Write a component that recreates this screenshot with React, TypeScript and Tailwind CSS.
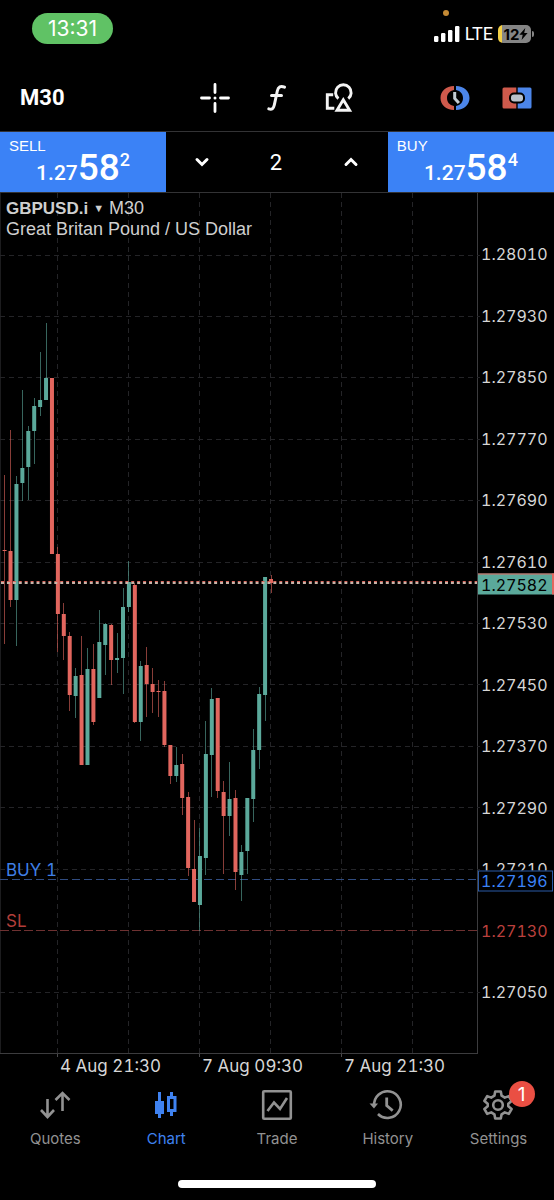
import React, { useState } from "react";

type Candle = [kind: "up" | "down", high: number, top: number, bottom: number, low: number];

const UP = "#5ba99b";
const DOWN = "#e2665e";

const CANDLES: Candle[] = [
  ["down", 475, 550, 551, 644],
  ["down", 430, 551, 600, 607],
  ["up", 476, 484, 600, 646],
  ["up", 390, 468, 483, 501],
  ["up", 426, 431, 467, 500],
  ["up", 398, 406, 431, 464],
  ["up", 352, 400, 407, 416],
  ["up", 323, 378, 400, 400],
  ["down", 378, 378, 554, 554],
  ["down", 547, 554, 614, 652],
  ["down", 603, 614, 636, 660],
  ["down", 632, 636, 695, 711],
  ["up", 668, 676, 696, 718],
  ["down", 636, 675, 765, 765],
  ["up", 648, 669, 765, 765],
  ["down", 644, 669, 722, 725],
  ["up", 610, 642, 698, 698],
  ["up", 623, 624, 645, 675],
  ["down", 624, 625, 660, 685],
  ["up", 633, 658, 660, 673],
  ["up", 588, 607, 658, 694],
  ["up", 561, 582, 607, 612],
  ["down", 583, 585, 722, 723],
  ["up", 661, 666, 722, 741],
  ["down", 647, 665, 684, 717],
  ["down", 668, 684, 692, 713],
  ["down", 680, 691, 692, 717],
  ["down", 681, 691, 745, 747],
  ["down", 745, 745, 776, 784],
  ["up", 747, 765, 776, 782],
  ["down", 754, 764, 798, 815],
  ["down", 792, 797, 868, 876],
  ["down", 820, 869, 902, 902],
  ["up", 828, 856, 905, 931],
  ["up", 721, 754, 858, 875],
  ["up", 688, 699, 755, 797],
  ["down", 698, 698, 791, 798],
  ["down", 781, 792, 816, 874],
  ["up", 762, 799, 816, 836],
  ["down", 790, 798, 872, 890],
  ["up", 845, 852, 875, 901],
  ["up", 798, 798, 851, 874],
  ["up", 729, 750, 799, 822],
  ["up", 687, 694, 750, 769],
  ["up", 577, 577, 695, 721],
  ["down", 575, 579, 583, 593],
];

const PRICES = [
  "1.28010", "1.27930", "1.27850", "1.27770", "1.27690", "1.27610", "1.27530",
  "1.27450", "1.27370", "1.27290", "1.27210", "1.27130", "1.27050",
];

const TOP = 193;
const HEIGHT = 860;
const WIDTH = 477;

function priceY(price: number) {
  return 255 + ((1.2801 - price) / 0.0008) * 61.42 - TOP;
}

function percent(price: number) {
  return `${(priceY(price) / HEIGHT) * 100}%`;
}

function StatusBar() {
  return (
    <div className="relative flex h-[62px] items-start justify-between pl-8 pr-5">
      <div className="mt-[13px] flex h-[31px] w-[81px] items-center justify-center rounded-full bg-[#60c265] text-[21px] leading-none">
        13:31
      </div>
      <span className="absolute right-[105px] top-[10px] size-[6px] rounded-full bg-[#c48a35]" />
      <div className="mt-6 flex h-5 items-center">
        <svg width="26" height="16" viewBox="0 0 26 16" fill="#fff" aria-hidden="true">
          <rect x="0" y="10" width="4.4" height="6" rx="1.2" />
          <rect x="7" y="7" width="4.4" height="9" rx="1.2" />
          <rect x="14" y="4" width="4.4" height="12" rx="1.2" />
          <rect x="21" y="0" width="4.4" height="16" rx="1.2" />
        </svg>
        <span className="ml-[5px] font-['Roboto'] text-[18px] leading-5">LTE</span>
        <div className="ml-[5px] flex h-[18px] w-[33px] items-center justify-center overflow-hidden rounded-[5px] bg-[linear-gradient(to_right,#f3cf45_4px,#858585_4px)] text-black">
          <span className="ml-[3px] text-[15px] font-bold leading-none">12</span>
          <svg width="9" height="12" viewBox="0 0 9 12" aria-hidden="true">
            <path d="M6.3 0 0.4 6.8h3.3L2.6 12 8.6 5H5.2z" fill="#000" />
          </svg>
        </div>
        <span className="ml-px h-[6px] w-[2px] rounded-r-full bg-[#858585]" />
      </div>
    </div>
  );
}

function ToolButton({ label, children }: { label: string; children: React.ReactNode }) {
  return (
    <button type="button" aria-label={label} className="flex h-12 w-[62px] items-center justify-center">
      {children}
    </button>
  );
}

function Toolbar() {
  return (
    <div className="grid h-[69px] grid-cols-[1fr_auto_1fr] items-center pt-[2px]">
      <div className="flex">
        <button type="button" className="pl-5 font-['Roboto'] text-[22px] font-bold leading-7">
          M30
        </button>
      </div>
      <div className="flex">
        <ToolButton label="Crosshair">
          <svg width="30" height="30" viewBox="0 0 30 30" stroke="#fff" strokeWidth="2.8" strokeLinecap="round" aria-hidden="true">
            <path d="M15 1.5v8M15 20.5v8M1.500 15h8M20.500 15h8" />
            <circle cx="15" cy="15" r="1.5" fill="#fff" stroke="none" />
          </svg>
        </ToolButton>
        <ToolButton label="Indicators">
          <svg width="20" height="28" viewBox="0 0 20 28" fill="none" stroke="#f4f4f4" strokeWidth="3" strokeLinecap="round" aria-hidden="true">
            <path d="M17.500 3.200c-3.800-1.700-6.300-.4-7.200 3.800L7.300 21c-.8 3.700-2.500 5-5.500 3.900M4.500 11.500h10" />
          </svg>
        </ToolButton>
        <ToolButton label="Objects">
          <svg width="28" height="30" viewBox="0 0 28 30" fill="none" stroke="#f4f4f4" strokeWidth="2.9" aria-hidden="true">
            <path d="M8.200 11.800H2.300v13.400h7" />
            <path d="M13.400 15.600a7.800 7.800 0 1 1 9.900 0" />
            <path d="M18.300 16.800 12 27.200h12.600z" />
          </svg>
        </ToolButton>
      </div>
      <div className="flex justify-end pr-[6px]">
        <ToolButton label="Trading sessions">
          <svg width="30" height="26" viewBox="0 0 30 26" fill="none" aria-hidden="true">
            <path d="M14 1C6 1 .5 6.300 .5 13s5.500 12 13.500 12v-4C9.300 20 7 17 7 13s2.300-7 7-8z" fill="#cf5a4c" />
            <path d="M16 1C24 1 29.500 6.300 29.500 13s-5.500 12-13.500 12v-4C20.700 20 23 17 23 13s-2.300-7-7-8z" fill="#4c86ea" />
            <path d="M14.700 7v6.500l4.200 4.600" stroke="#c3cbd2" strokeWidth="3" />
          </svg>
        </ToolButton>
        <ToolButton label="One click trading">
          <svg width="30" height="22" viewBox="0 0 30 22" aria-hidden="true">
            <path d="M2 .5h12.300v21H2A1.500 1.500 0 0 1 .5 20V2A1.500 1.500 0 0 1 2 .5z" fill="#cf5a4c" />
            <path d="M15.700 .5H28A1.500 1.500 0 0 1 29.500 2v18a1.500 1.500 0 0 1-1.500 1.500H15.700z" fill="#4c86ea" />
            <rect x="7" y="5.5" width="16" height="11" rx="5" fill="#000" />
            <rect x="9" y="7.5" width="12" height="7" rx="3" fill="#b9c2cb" />
          </svg>
        </ToolButton>
      </div>
    </div>
  );
}

function QuoteButton({ side, pip }: { side: string; pip: string }) {
  return (
    <button type="button" className="flex h-[60px] flex-col bg-[#3b82f6] pt-[6px] text-left">
      <span className="pl-[9px] font-['Liberation_Sans'] text-[15px] leading-4">{side}</span>
      <span className="-mt-[6px] flex items-baseline self-center font-['Roboto'] font-medium leading-10">
        <span className="text-[21px]">1.27</span>
        <span className="text-[37px]">58</span>
        <span className="self-start text-[18px] leading-6">{pip}</span>
      </span>
    </button>
  );
}

function TradePanel() {
  const [volume, setVolume] = useState(2);
  return (
    <div className="grid grid-cols-[3fr_4fr_3fr] border-y border-[#333335]">
      <QuoteButton side="SELL" pip="2" />
      <div className="flex items-center justify-between">
        <button type="button" aria-label="Decrease volume" onClick={() => setVolume(Math.max(1, volume - 1))} className="flex h-full w-[72px] items-center justify-center">
          <svg width="16" height="12" viewBox="0 0 16 12" fill="none" stroke="#fff" strokeWidth="3" strokeLinecap="round" aria-hidden="true">
            <path d="m3 3.500 5 5 5-5" />
          </svg>
        </button>
        <input
          aria-label="Volume"
          value={volume}
          onChange={(e) => setVolume(Number(e.target.value) || 1)}
          className="w-10 min-w-0 flex-1 bg-transparent pt-[2px] text-center font-['Roboto'] text-[22px] leading-7 outline-none"
        />
        <button type="button" aria-label="Increase volume" onClick={() => setVolume(volume + 1)} className="flex h-full w-[74px] items-center justify-center">
          <svg width="16" height="12" viewBox="0 0 16 12" fill="none" stroke="#fff" strokeWidth="3" strokeLinecap="round" aria-hidden="true">
            <path d="m3 8.500 5-5 5 5" />
          </svg>
        </button>
      </div>
      <QuoteButton side="BUY" pip="4" />
    </div>
  );
}

function Plot() {
  const current = Math.round(priceY(1.27582)) - 1;
  const entry = Math.floor(priceY(1.27196)) + 0.5;
  return (
    <svg className="absolute inset-0 size-full overflow-visible" viewBox={`0 0 ${WIDTH} ${HEIGHT}`} preserveAspectRatio="none" role="img" aria-label="GBPUSD.i price chart">
      <g stroke="#242427" strokeDasharray="5 4">
        <line x1="0.5" x2="0.5" y1="0" y2={HEIGHT} stroke="#1c1c1e" strokeDasharray="none" />
        {[57.5, 128.5, 199.5, 270.5, 341.5, 412.5].map((x) => (
          <line key={x} x1={x} x2={x} y1="0" y2={HEIGHT} />
        ))}
        {PRICES.map((p) => {
          const y = Math.floor(priceY(Number(p))) + 0.5;
          const stop = p === "1.27130";
          return (
            <line key={p} x1="0" x2={WIDTH + 3} y1={y} y2={y} stroke={stop ? "#6e3131" : "#242427"} strokeDasharray={stop ? "9 3" : "5 4"} />
          );
        })}
      </g>
      <line x1="0" x2={WIDTH} y1={entry} y2={entry} stroke="#304c80" strokeDasharray="8 4" />
      {CANDLES.map(([kind, high, top, bottom, low], i) => {
        const x = 4.6 + i * 5.92;
        const color = kind === "up" ? UP : DOWN;
        return (
          <g key={i} fill={color}>
            <rect x={Math.floor(x)} y={high - TOP} width="1" height={low - high} opacity="0.6" />
            <rect x={x - 2} y={top - TOP} width="4" height={bottom - top} />
          </g>
        );
      })}
      <line x1="1" x2={WIDTH} y1={current - 1.5} y2={current - 1.5} stroke="#d8655b" strokeDasharray="3 2.92" />
      <line x1="1" x2={WIDTH} y1={current} y2={current} stroke="#c9b3a8" strokeWidth="2" strokeDasharray="3 2.92" />
    </svg>
  );
}

function Chart() {
  return (
    <div className="flex min-h-[600px] flex-1 text-[#d6d6d6]">
      <div className="relative flex-1 border-b border-r border-[#3c3c3e]">
        <Plot />
        <div className="relative pl-[6px] pt-[5px] font-['Liberation_Sans'] text-[18px] leading-[21px] text-[#cfcfcf]">
          <p>
            <span className="text-[17px] font-bold">GBPUSD.i</span>
            <span className="px-[5px] align-[2px] text-[11px]">▼</span>
            M30
          </p>
          <p>Great Britan Pound / US Dollar</p>
        </div>
        <span className="absolute left-[6px] -translate-y-full text-[17px] leading-5 tabular-nums text-[#3f7fe6]" style={{ top: percent(1.27196) }}>
          BUY 1
        </span>
        <span className="absolute left-[6px] -translate-y-full text-[17px] leading-5 text-[#b23e3a]" style={{ top: percent(1.2713) }}>
          SL
        </span>
      </div>
      <div className="relative w-[76px] text-[16px] leading-5 tabular-nums">
        <ol className="flex h-full flex-col justify-between pb-[52px] pl-[3px] pt-[51px]">
          {PRICES.map((p) => (
            <li key={p} className={p === "1.27130" ? "text-[#bb403d]" : ""}>
              {p}
            </li>
          ))}
        </ol>
        <span className="absolute inset-x-0 -translate-y-1/2 border-r-2 border-t border-[#e2665e] bg-[#5ba99b] pl-[3px] leading-5 text-black" style={{ top: percent(1.27582) }}>
          1.27582
        </span>
        <span className="absolute inset-x-0 mr-px -translate-y-1/2 border border-[#2b5aa6] bg-black pl-[2px] leading-[19px] text-[#3b82f6]" style={{ top: percent(1.27196) }}>
          1.27196
        </span>
      </div>
    </div>
  );
}

function TimeAxis() {
  return (
    <ol className="mr-[76px] grid h-[31px] grid-cols-[57fr_142fr_142fr_137fr] text-[17px] leading-[18px] tabular-nums text-[#d6d6d6]">
      {["4 Aug 21:30", "7 Aug 09:30", "7 Aug 21:30"].map((t) => (
        <li key={t} className="whitespace-nowrap first:col-start-2">
          <span className="block h-[3px] w-px bg-[#4a4a4c]" />
          <span className="pl-[3px]">{t}</span>
        </li>
      ))}
    </ol>
  );
}

function Tab({ label, active, badge, children }: { label: string; active?: boolean; badge?: string; children: React.ReactNode }) {
  return (
    <a href={`#${label.toLowerCase()}`} aria-current={active ? "page" : undefined} className={`flex flex-1 flex-col items-center ${active ? "text-[#3f82f0]" : "text-[#929292]"}`}>
      <span className="relative">
        <svg width="32" height="32" viewBox="0 0 32 32" fill="none" stroke="currentColor" strokeWidth="2.6" className="overflow-visible" aria-hidden="true">
          {children}
        </svg>
        {badge && (
          <span className="absolute -right-5 -top-2 flex size-[26px] items-center justify-center rounded-full bg-[#ea4f43] text-[19px] leading-none text-white">
            {badge}
          </span>
        )}
      </span>
      <span className="mt-2 text-[15px] leading-5">{label}</span>
    </a>
  );
}

function TabBar() {
  return (
    <nav className="flex h-[95px] pt-1">
      <Tab label="Quotes">
        <path d="M8.500 10v17.500M2 21l6.500 7 6.500-7M23.500 22V4.500M16.500 11l7-7 7 7" />
      </Tab>
      <Tab label="Chart" active>
        <path d="M9.500 3v26M21.500 3v5M21.500 22v5" strokeWidth="3" />
        <rect x="5" y="12" width="9" height="13" fill="currentColor" stroke="none" />
        <rect x="18.5" y="8.5" width="6.500" height="13" strokeWidth="3" />
      </Tab>
      <Tab label="Trade">
        <rect x="2.200" y="2.200" width="27.600" height="27.600" rx="1" />
        <path d="m6.500 22 6.500-8.500 6 6.500 7-11" />
      </Tab>
      <Tab label="History">
        <path d="M2.200 17A13.300 13.300 0 1 1 6 25" />
        <path d="M14.700 8.500v8.200l6 5" strokeWidth="2.800" />
        <path d="M-2.500 14.500h8.500l-4 5z" fill="currentColor" stroke="none" />
      </Tab>
      <Tab label="Settings" badge="1">
        <circle cx="15" cy="16" r="4.800" />
        <path d="M12.200 2.500h5.600l.8 4.200 3.200 1.900 4-1.500 2.800 4.900-3.300 2.700v2.600l3.300 2.700-2.800 4.900-4-1.500-3.200 1.900-.8 4.200h-5.600l-.8-4.200-3.200-1.900-4 1.500L1.400 20l3.300-2.700v-2.600L1.400 12l2.800-4.900 4 1.500 3.200-1.900z" strokeLinejoin="round" />
      </Tab>
    </nav>
  );
}

export default function App() {
  return (
    <main className="flex min-h-screen flex-col bg-black font-['Inter',sans-serif] text-white">
      <StatusBar />
      <Toolbar />
      <TradePanel />
      <Chart />
      <TimeAxis />
      <TabBar />
      <div className="mx-auto mb-3 h-[8px] w-[198px] rounded-full bg-white" />
    </main>
  );
}
